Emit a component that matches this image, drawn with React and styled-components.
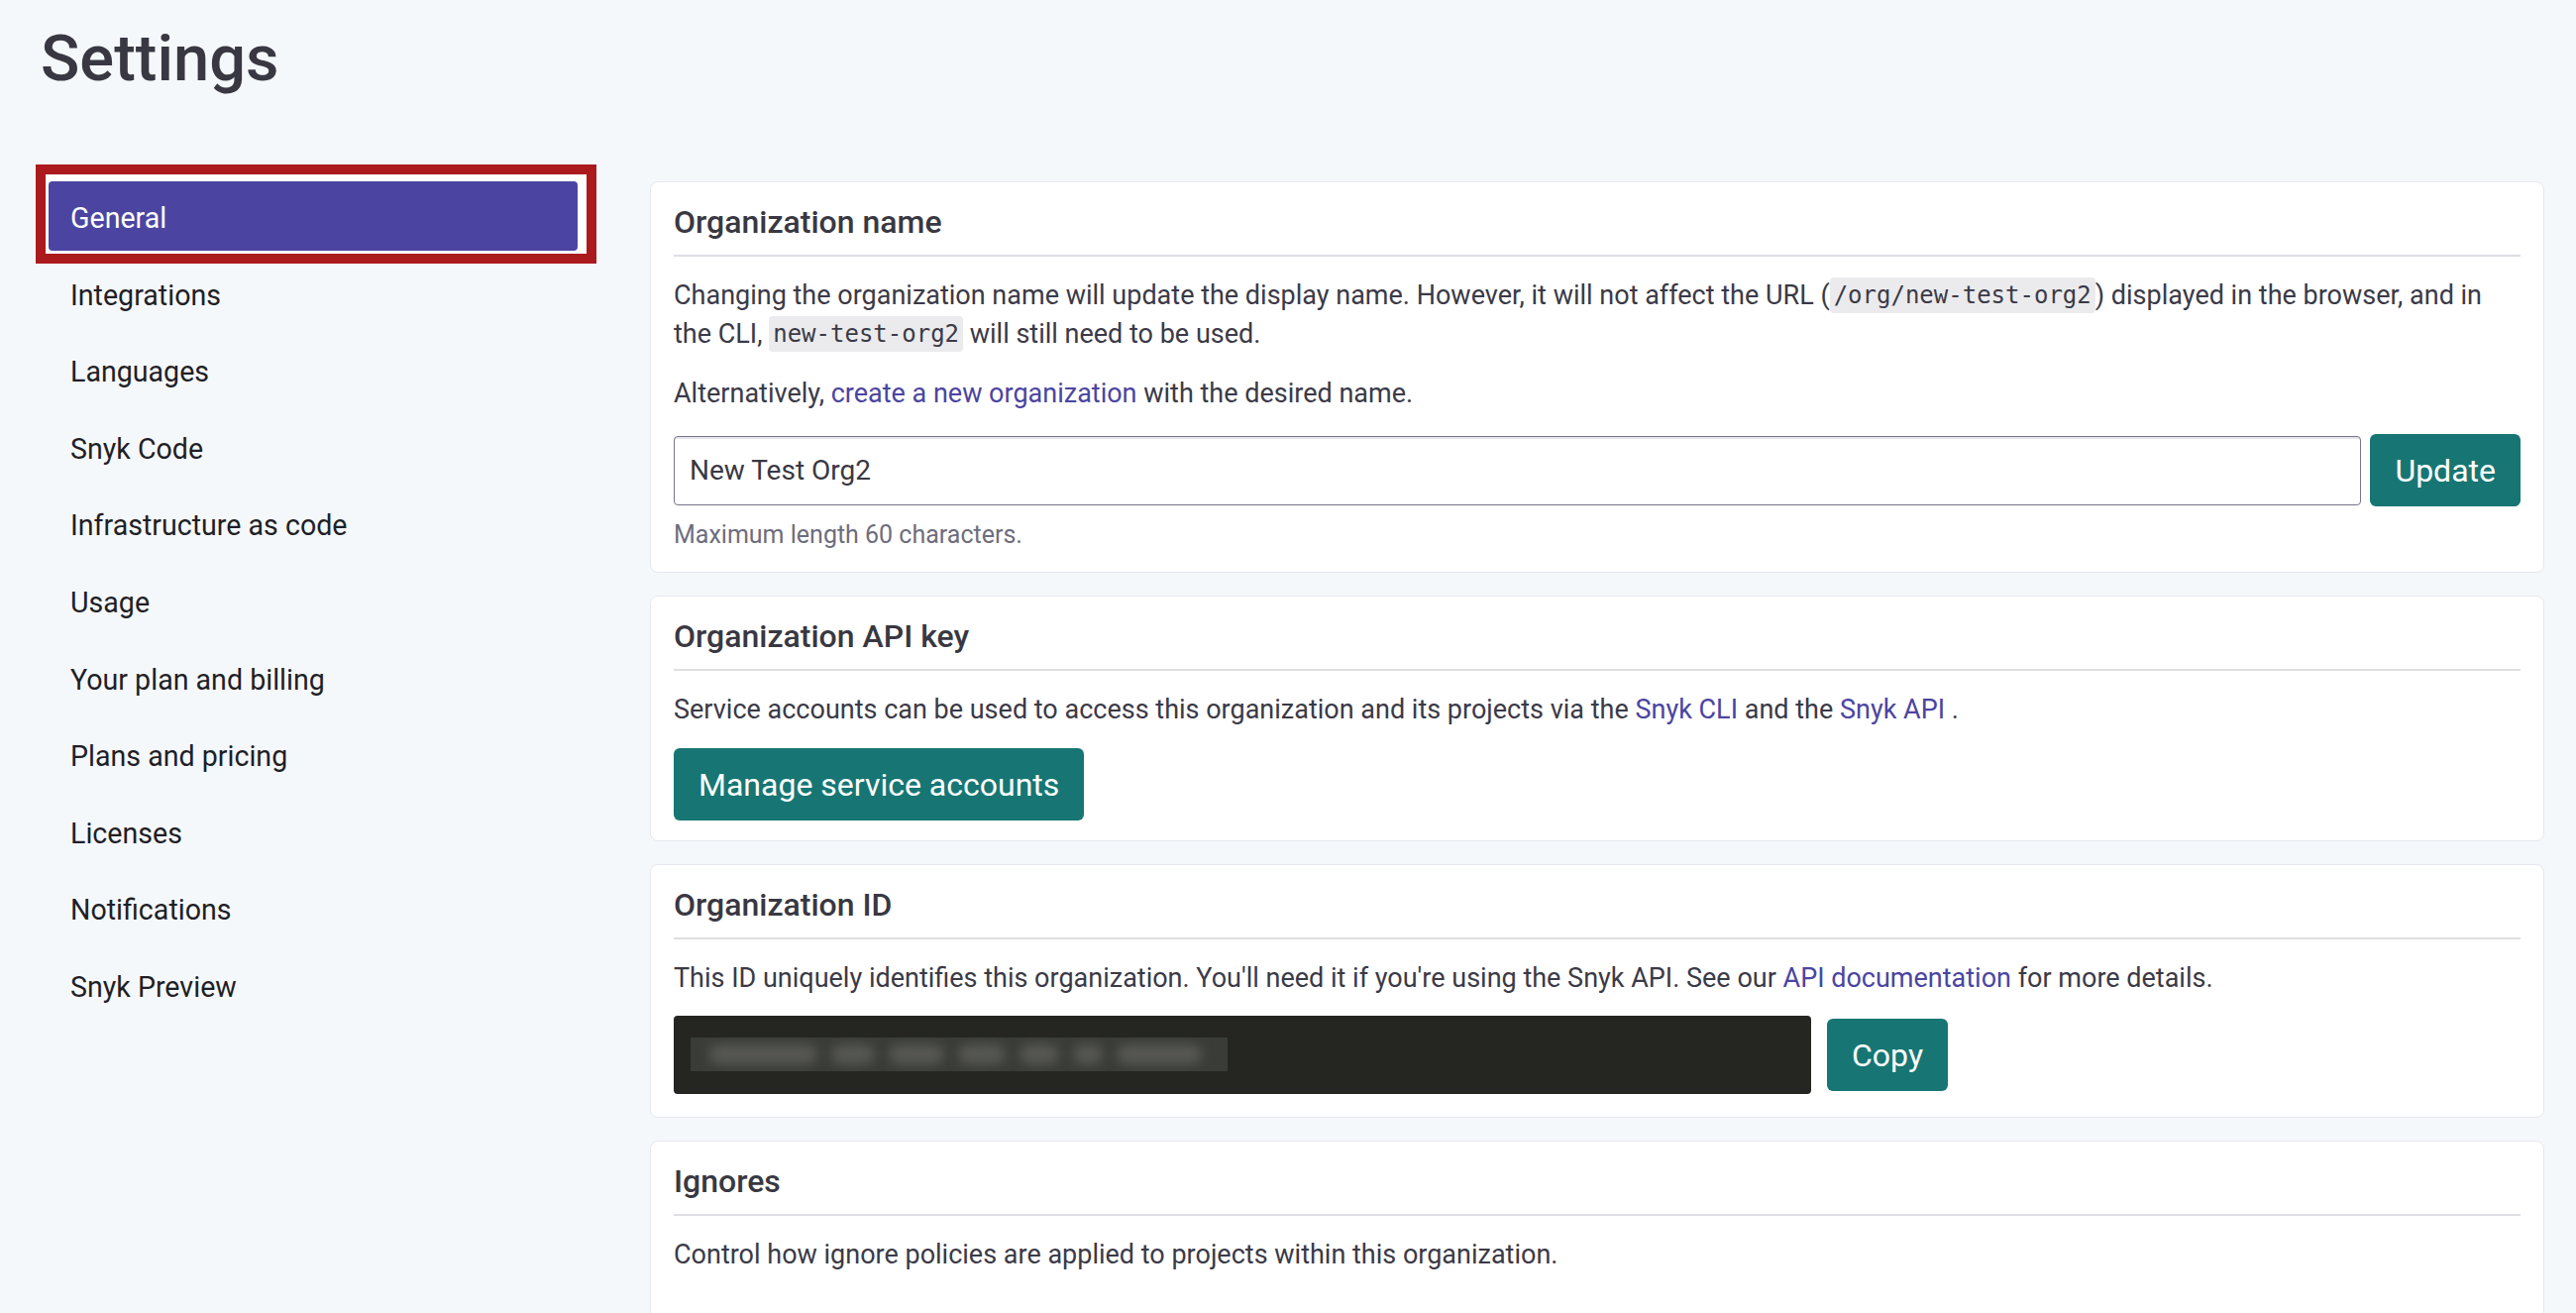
import React from "react";
import styled, { createGlobalStyle } from "styled-components";

const GlobalStyle = createGlobalStyle`
  html, body {
    margin: 0;
    padding: 0;
    background: #f5f8fb;
    font-family: Roboto, "Liberation Sans", sans-serif;
    color: #393842;
  }
  * { box-sizing: border-box; }
`;

const Page = styled.div`
  padding: 21px 32px 0 49px;
  min-height: 1325px;
`;

const Title = styled.h1`
  margin: 0 0 85px -8px;
  font-size: 65px;
  line-height: 77px;
  font-weight: 500;
  color: #393842;
`;

const Layout = styled.div`
  display: grid;
  grid-template-columns: 534px 1fr;
  column-gap: 73px;
  align-items: start;
`;

const Nav = styled.nav`
  display: flex;
  flex-direction: column;
  gap: 7.6px;
`;

const NavItem = styled.a`
  display: block;
  height: 70px;
  padding: 5px 22px 0;
  line-height: 65px;
  font-size: 28.6px;
  border-radius: 4px;
  color: ${({ $active }) => ($active ? "#ffffff" : "#1f1f26")};
  background: ${({ $active }) => ($active ? "#4b45a1" : "transparent")};
  text-decoration: none;
  cursor: pointer;
`;

const Highlight = styled.div`
  margin: -17px -19px -13px -13px;
  padding: 7px 9px 3px 3px;
  border: 10px solid #ab1a1d;
  background: #ffffff;
`;

const Content = styled.main`
  display: flex;
  flex-direction: column;
  gap: 23px;
`;

const Card = styled.section`
  background: #ffffff;
  border: 1px solid #e5e8ee;
  border-radius: 8px;
  padding: 20px 23px ${({ $pb }) => $pb || "20px"};
`;

const CardTitle = styled.h2`
  margin: 0 0 20px;
  padding-bottom: 13px;
  border-bottom: 2px solid #dedee3;
  font-size: 32px;
  line-height: 40px;
  font-weight: 500;
  color: #393842;
`;

const Text = styled.p`
  margin: 0 0 ${({ $mb }) => $mb || "21px"};
  font-size: 27px;
  line-height: 39px;
  color: #3b3a47;
`;

const Link = styled.a`
  color: #4b45a1;
  text-decoration: none;
  cursor: pointer;
`;

const Code = styled.code`
  display: inline-block;
  padding: 0 4px;
  font-family: "DejaVu Sans Mono", "Liberation Mono", monospace;
  font-size: 24px;
  line-height: 36px;
  background: #ebebed;
  border-radius: 4px;
  color: #3b3a47;
  vertical-align: 1px;
`;

const InputRow = styled.div`
  display: flex;
  align-items: center;
  gap: 9px;
`;

const Input = styled.input`
  flex: 1;
  height: 70px;
  padding: 0 15px;
  border: 1.5px solid #77758b;
  border-radius: 4px;
  box-shadow: inset 0 2px 0 #e6e6ea;
  font-family: Roboto, "Liberation Sans", sans-serif;
  font-size: 28px;
  color: #393842;
  outline: none;
`;

const Button = styled.button`
  height: 73px;
  padding: 0 25px;
  border: none;
  border-radius: 6px;
  background: #177673;
  color: #ffffff;
  font-family: Roboto, "Liberation Sans", sans-serif;
  font-size: 32px;
  cursor: pointer;
  flex-shrink: 0;
`;

const Helper = styled.div`
  margin-top: 12px;
  font-size: 25px;
  line-height: 34px;
  color: #6e6d7c;
`;

const IdRow = styled.div`
  display: flex;
  align-items: center;
  gap: 16px;
  margin-top: -3px;
  margin-bottom: 3px;
`;

const IdBox = styled.div`
  width: 1148px;
  height: 79px;
  background: #252622;
  border-radius: 4px;
  padding: 22px 17px;
  overflow: hidden;
`;

/* redacted id: a blurred strip */
const Redacted = styled.div`
  width: 542px;
  height: 34px;
  background: #3a3c37;
  overflow: hidden;
  display: flex;
  align-items: center;
  gap: 14px;
  padding: 0 18px;
`;

const Blob = styled.span`
  display: block;
  height: 20px;
  width: ${({ $w }) => $w}px;
  background: #575853;
  border-radius: 10px;
  filter: blur(6px);
`;

const navItems = [
  "General",
  "Integrations",
  "Languages",
  "Snyk Code",
  "Infrastructure as code",
  "Usage",
  "Your plan and billing",
  "Plans and pricing",
  "Licenses",
  "Notifications",
  "Snyk Preview",
];

const blobs = [110, 44, 56, 48, 40, 30, 86];

export default function App() {
  return (
    <>
      <GlobalStyle />
      <Page>
        <Title>Settings</Title>
        <Layout>
          <Nav>
            {navItems.map((item, i) =>
              i === 0 ? (
                <Highlight key={item}>
                  <NavItem $active>{item}</NavItem>
                </Highlight>
              ) : (
                <NavItem key={item}>{item}</NavItem>
              )
            )}
          </Nav>
          <Content>
            <Card>
              <CardTitle>Organization name</CardTitle>
              <Text>
                Changing the organization name will update the display name. However, it will not
                affect the URL (<Code>/org/new-test-org2</Code>) displayed in the browser, and in the
                CLI, <Code>new-test-org2</Code> will still need to be used.
              </Text>
              <Text>
                Alternatively, <Link>create a new organization</Link> with the desired name.
              </Text>
              <InputRow>
                <Input defaultValue="New Test Org2" />
                <Button>Update</Button>
              </InputRow>
              <Helper>Maximum length 60 characters.</Helper>
            </Card>

            <Card>
              <CardTitle>Organization API key</CardTitle>
              <Text $mb="19px">
                Service accounts can be used to access this organization and its projects via the{" "}
                <Link>Snyk CLI</Link> and the <Link>Snyk API</Link> .
              </Text>
              <Button>Manage service accounts</Button>
            </Card>

            <Card>
              <CardTitle>Organization ID</CardTitle>
              <Text>
                This ID uniquely identifies this organization. You'll need it if you're using the
                Snyk API. See our <Link>API documentation</Link> for more details.
              </Text>
              <IdRow>
                <IdBox>
                  <Redacted>
                    {blobs.map((w, i) => (
                      <Blob key={i} $w={w} />
                    ))}
                  </Redacted>
                </IdBox>
                <Button>Copy</Button>
              </IdRow>
            </Card>

            <Card $pb="80px">
              <CardTitle>Ignores</CardTitle>
              <Text>Control how ignore policies are applied to projects within this organization.</Text>
            </Card>
          </Content>
        </Layout>
      </Page>
    </>
  );
}
